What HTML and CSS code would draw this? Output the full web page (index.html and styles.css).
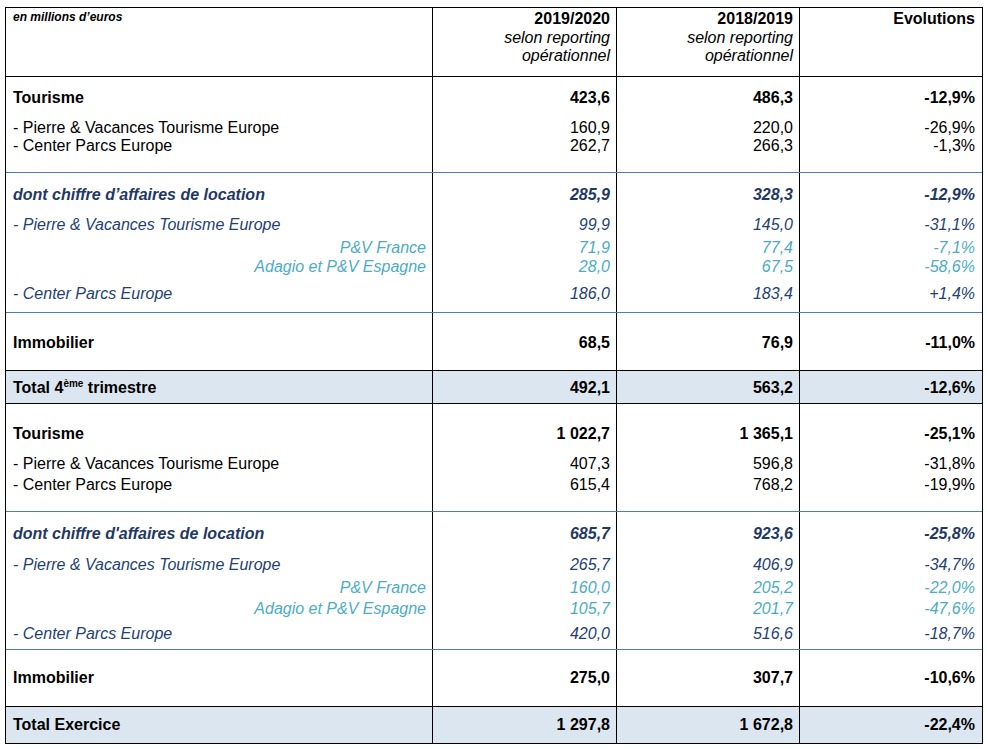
FILE: index.html
```html
<!DOCTYPE html>
<html lang="fr">
<head>
<meta charset="utf-8">
<title>Chiffre d'affaires</title>
<link rel="stylesheet" href="styles.css">
</head>
<body>
<div class="tbl">
  <div class="sec head">
    <div class="cell c1"><div class="unit">en millions d’euros</div></div>
    <div class="cell cn"><div class="hl b">2019/2020</div><div class="hl i">selon reporting</div><div class="hl i">opérationnel</div></div>
    <div class="cell cn"><div class="hl b">2018/2019</div><div class="hl i">selon reporting</div><div class="hl i">opérationnel</div></div>
    <div class="cell cn c4"><div class="hl b">Evolutions</div></div>
  </div>

  <div class="sec s1 bk">
    <div class="cell c1"><div class="ln b">Tourisme</div><div class="ln g2">- Pierre &amp; Vacances Tourisme Europe</div><div class="ln g3">- Center Parcs Europe</div></div>
    <div class="cell cn"><div class="ln b">423,6</div><div class="ln g2">160,9</div><div class="ln g3">262,7</div></div>
    <div class="cell cn"><div class="ln b">486,3</div><div class="ln g2">220,0</div><div class="ln g3">266,3</div></div>
    <div class="cell cn c4"><div class="ln b">-12,9%</div><div class="ln g2">-26,9%</div><div class="ln g3">-1,3%</div></div>
  </div>

  <div class="sec s2 bl">
    <div class="cell c1"><div class="ln dk bi">dont chiffre d’affaires de location</div><div class="ln g2 md i">- Pierre &amp; Vacances Tourisme Europe</div><div class="ln g3 lt i ra">P&amp;V France</div><div class="ln g4 lt i ra">Adagio et P&amp;V Espagne</div><div class="ln g5 md i">- Center Parcs Europe</div></div>
    <div class="cell cn"><div class="ln dk bi">285,9</div><div class="ln g2 md i">99,9</div><div class="ln g3 lt i">71,9</div><div class="ln g4 lt i">28,0</div><div class="ln g5 md i">186,0</div></div>
    <div class="cell cn"><div class="ln dk bi">328,3</div><div class="ln g2 md i">145,0</div><div class="ln g3 lt i">77,4</div><div class="ln g4 lt i">67,5</div><div class="ln g5 md i">183,4</div></div>
    <div class="cell cn c4"><div class="ln dk bi">-12,9%</div><div class="ln g2 md i">-31,1%</div><div class="ln g3 lt i">-7,1%</div><div class="ln g4 lt i">-58,6%</div><div class="ln g5 md i">+1,4%</div></div>
  </div>

  <div class="sec s3 bl">
    <div class="cell c1"><div class="ln b">Immobilier</div></div>
    <div class="cell cn"><div class="ln b">68,5</div></div>
    <div class="cell cn"><div class="ln b">76,9</div></div>
    <div class="cell cn c4"><div class="ln b">-11,0%</div></div>
  </div>

  <div class="sec t1 bk tot">
    <div class="cell c1"><div class="ln b">Total 4<sup>ème</sup> trimestre</div></div>
    <div class="cell cn"><div class="ln b">492,1</div></div>
    <div class="cell cn"><div class="ln b">563,2</div></div>
    <div class="cell cn c4"><div class="ln b">-12,6%</div></div>
  </div>

  <div class="sec s4 bk">
    <div class="cell c1"><div class="ln b">Tourisme</div><div class="ln g2">- Pierre &amp; Vacances Tourisme Europe</div><div class="ln g3">- Center Parcs Europe</div></div>
    <div class="cell cn"><div class="ln b">1 022,7</div><div class="ln g2">407,3</div><div class="ln g3">615,4</div></div>
    <div class="cell cn"><div class="ln b">1 365,1</div><div class="ln g2">596,8</div><div class="ln g3">768,2</div></div>
    <div class="cell cn c4"><div class="ln b">-25,1%</div><div class="ln g2">-31,8%</div><div class="ln g3">-19,9%</div></div>
  </div>

  <div class="sec s5 bl">
    <div class="cell c1"><div class="ln dk bi">dont chiffre d'affaires de location</div><div class="ln g2 md i">- Pierre &amp; Vacances Tourisme Europe</div><div class="ln g3 lt i ra">P&amp;V France</div><div class="ln g4 lt i ra">Adagio et P&amp;V Espagne</div><div class="ln g5 md i">- Center Parcs Europe</div></div>
    <div class="cell cn"><div class="ln dk bi">685,7</div><div class="ln g2 md i">265,7</div><div class="ln g3 lt i">160,0</div><div class="ln g4 lt i">105,7</div><div class="ln g5 md i">420,0</div></div>
    <div class="cell cn"><div class="ln dk bi">923,6</div><div class="ln g2 md i">406,9</div><div class="ln g3 lt i">205,2</div><div class="ln g4 lt i">201,7</div><div class="ln g5 md i">516,6</div></div>
    <div class="cell cn c4"><div class="ln dk bi">-25,8%</div><div class="ln g2 md i">-34,7%</div><div class="ln g3 lt i">-22,0%</div><div class="ln g4 lt i">-47,6%</div><div class="ln g5 md i">-18,7%</div></div>
  </div>

  <div class="sec s6 bl">
    <div class="cell c1"><div class="ln b">Immobilier</div></div>
    <div class="cell cn"><div class="ln b">275,0</div></div>
    <div class="cell cn"><div class="ln b">307,7</div></div>
    <div class="cell cn c4"><div class="ln b">-10,6%</div></div>
  </div>

  <div class="sec t2 bk tot">
    <div class="cell c1"><div class="ln b">Total Exercice</div></div>
    <div class="cell cn"><div class="ln b">1 297,8</div></div>
    <div class="cell cn"><div class="ln b">1 672,8</div></div>
    <div class="cell cn c4"><div class="ln b">-22,4%</div></div>
  </div>
</div>
</body>
</html>
```

FILE: styles.css
```css
* { box-sizing: border-box; }
html, body { margin: 0; padding: 0; background: #fff; }
body {
  font-family: "Liberation Sans", Arial, sans-serif;
  font-size: 16px;
  color: #000;
}
.tbl {
  width: 978px;
  margin: 7px 0 0 5px;
  border: 1px solid #000;
}
.sec {
  display: grid;
  grid-template-columns: 426px 184px 183px 183px;
}
.sec.bk { border-top: 1px solid #000; }
.sec.bl { border-top: 1px solid #4a7ebb; }
.tot { background: #dce6f1; }
.cell { display: flex; flex-direction: column; }
.c1 { padding: 0 6px 0 7px; text-align: left; }
.cn { padding: 0 6px 0 0; text-align: right; border-left: 1px solid #000; }
.c4 { padding-right: 7px; }

.ln { line-height: 18px; white-space: nowrap; }
.hl { line-height: 18.5px; white-space: nowrap; }
.unit { font-size: 12px; line-height: 14px; font-weight: bold; font-style: italic; }
.b { font-weight: bold; }
.i { font-style: italic; }
.bi { font-weight: bold; font-style: italic; }
.ra { text-align: right; }
.dk { color: #1f3864; }
.md { color: #243f75; }
.lt { color: #4bacc6; }
sup { font-size: 10px; line-height: 0; vertical-align: 6px; }

/* section geometry */
.head { height: 68px; }
.head .cell { padding-top: 2px; }
.head .c1 { padding-top: 2px; }

.s1 { height: 96px; }
.s1 .cell { padding-top: 11.5px; }
.s1 .g2 { margin-top: 12px; }

.s2 { height: 140px; }
.s2 .cell { padding-top: 13px; }
.s2 .g2 { margin-top: 12px; }
.s2 .g3 { margin-top: 4.5px; }
.s2 .g4 { margin-top: 1px; }
.s2 .g5 { margin-top: 9.5px; }

.s3 { height: 58px; }
.s3 .cell { padding-top: 21px; }

.t1 { height: 33px; }
.t1 .cell { padding-top: 8px; }

.s4 { height: 108px; }
.s4 .cell { padding-top: 20.5px; }
.s4 .g2 { margin-top: 12.5px; }
.s4 .g3 { margin-top: 2.5px; }

.s5 { height: 138px; }
.s5 .cell { padding-top: 13px; }
.s5 .g2 { margin-top: 13px; }
.s5 .g3 { margin-top: 4.5px; }
.s5 .g4 { margin-top: 3.5px; }
.s5 .g5 { margin-top: 7px; }

.s6 { height: 57px; }
.s6 .cell { padding-top: 18.5px; }

.t2 { height: 37px; }
.t2 .cell { padding-top: 9px; }
```
